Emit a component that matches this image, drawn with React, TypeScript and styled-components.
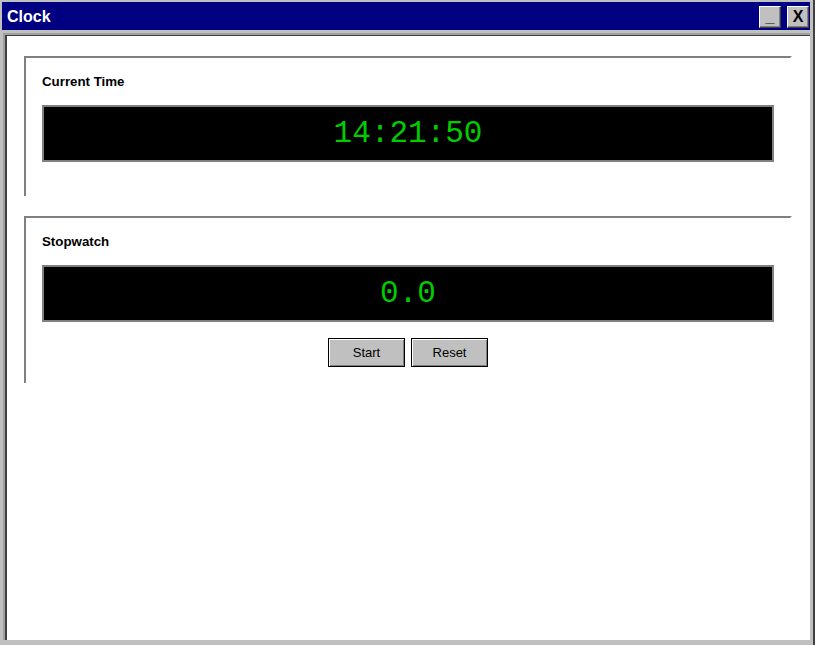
import React from "react";
import styled, { createGlobalStyle } from "styled-components";

const Global = createGlobalStyle`
  html, body { margin: 0; padding: 0; overflow: hidden; background: #c0c0c0; }
  * { box-sizing: border-box; }
`;

const Window = styled.div`
  width: 815px;
  height: 645px;
  background: #c0c0c0;
  padding: 2px 3px 5px 3px;
  border-right: 2px solid #404040;
  display: flex;
  flex-direction: column;
  font-family: "Liberation Sans", Arial, sans-serif;
`;

const TitleBar = styled.div`
  height: 28px;
  margin-left: -1px;
  background: #000080;
  display: flex;
  align-items: center;
  justify-content: space-between;
  padding: 1px 1px 0 5px;
`;

const Title = styled.span`
  color: #ffffff;
  font-weight: bold;
  font-size: 16px;
`;

const Controls = styled.div`
  display: flex;
  gap: 6px;
  align-items: center;
`;

const TitleButton = styled.div`
  width: 22px;
  height: 22px;
  background: #c0c0c0;
  border-top: 1px solid #ffffff;
  border-left: 1px solid #ffffff;
  border-right: 1px solid #404040;
  border-bottom: 1px solid #404040;
  box-shadow: inset -1px -1px 0 #808080;
  display: flex;
  align-items: center;
  justify-content: center;
  font-weight: bold;
  font-size: 16px;
  color: #000;
  line-height: 1;
`;

const Content = styled.div`
  flex: 1;
  margin-top: 3px;
  background: #ffffff;
  border-top: 2px solid #a0a0a0;
  border-left: 2px solid #a0a0a0;
  box-shadow: inset 2px 1px 0 #404040;
  padding: 21px 18px 0 19px;
  display: flex;
  flex-direction: column;
  gap: 20px;
`;

const Group = styled.section<{ $bottom: number }>`
  border-top: 2px solid #808080;
  border-left: 2px solid #808080;
  border-right: 2px solid transparent;
  padding: 16px 16px ${(p) => p.$bottom}px 16px;
  display: flex;
  flex-direction: column;
  gap: 16px;
`;

const Label = styled.div`
  font-size: 13.3px;
  font-weight: bold;
  line-height: 15px;
  color: #000;
`;

const Display = styled.div`
  height: 57px;
  background: #000000;
  border: 2px solid #808080;
  color: #00cc00;
  font-family: "Liberation Mono", "Courier New", monospace;
  font-size: 31px;
  display: flex;
  align-items: center;
  justify-content: center;
`;

const ButtonRow = styled.div`
  display: flex;
  justify-content: center;
  gap: 6px;
`;

const Button = styled.button`
  width: 77px;
  height: 29px;
  background: #c0c0c0;
  border: 1px solid #000;
  box-shadow: inset 1px 1px 0 #ffffff, inset -1px -1px 0 #808080;
  font-family: "Liberation Sans", Arial, sans-serif;
  font-size: 13px;
  color: #000;
  padding: 0;
`;

export default function App() {
  return (
    <>
      <Global />
      <Window>
        <TitleBar>
          <Title>Clock</Title>
          <Controls>
            <TitleButton>_</TitleButton>
            <TitleButton>X</TitleButton>
          </Controls>
        </TitleBar>
        <Content>
          <Group $bottom={34}>
            <Label>Current Time</Label>
            <Display>14:21:50</Display>
          </Group>
          <Group $bottom={16}>
            <Label>Stopwatch</Label>
            <Display>0.0</Display>
            <ButtonRow>
              <Button>Start</Button>
              <Button>Reset</Button>
            </ButtonRow>
          </Group>
        </Content>
      </Window>
    </>
  );
}
